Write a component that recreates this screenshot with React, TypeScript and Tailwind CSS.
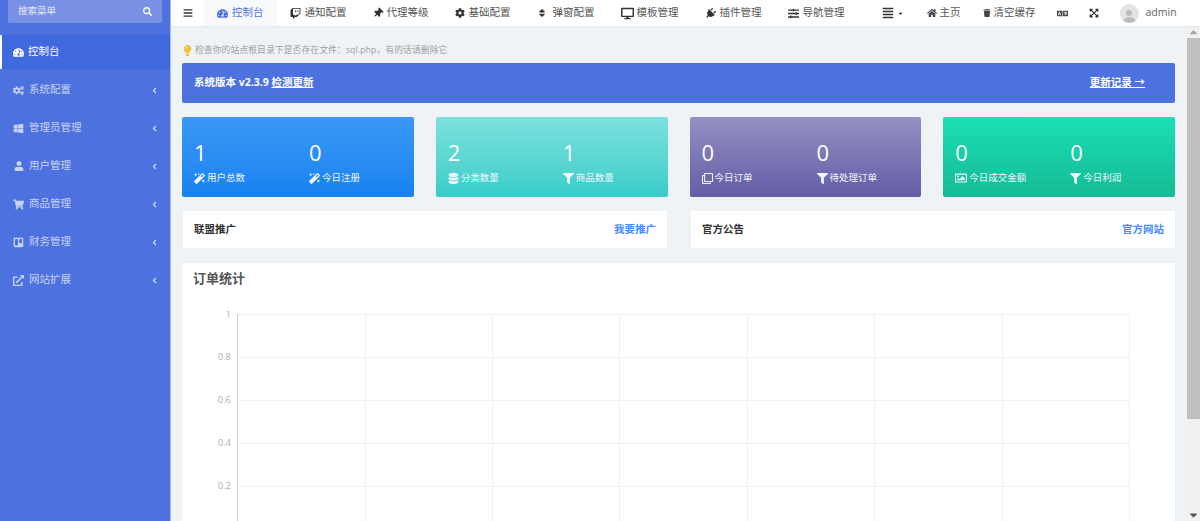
import type { ReactNode } from "react";
import {
  FaAngleLeft, FaBars, FaCaretDown, FaCogs, FaDatabase, FaDesktop, FaExpand, FaFilter,
  FaHome, FaLanguage, FaLightbulb, FaMagic, FaPlug, FaRegClone, FaRegImage, FaSearch, FaShoppingCart,
  FaSlidersH, FaSort, FaTachometerAlt, FaThumbtack, FaTrash, FaTrello, FaTwitch, FaUser, FaWindows,
  FaCog, FaExternalLinkAlt, FaAlignJustify, FaCaretUp, FaExpandArrowsAlt,
} from "react-icons/fa";

const font = "font-['Open_Sans','Noto_Sans_CJK_SC',sans-serif]";

const menu = [
  { icon: <FaCogs />, label: "系统配置" },
  { icon: <FaWindows />, label: "管理员管理" },
  { icon: <FaUser className="text-[10px] ml-[1px]" />, label: "用户管理" },
  { icon: <FaShoppingCart />, label: "商品管理" },
  { icon: <FaTrello />, label: "财务管理" },
  { icon: <FaExternalLinkAlt />, label: "网站扩展" },
];

const tabs = [
  { icon: <FaTwitch className="text-[11px]" />, label: "通知配置", gap: "gap-[4px]" },
  { icon: <FaThumbtack className="rotate-45" />, label: "代理等级", gap: "gap-[4px]" },
  { icon: <FaCog />, label: "基础配置", gap: "gap-[4px]" },
  { icon: <FaSort />, label: "弹窗配置", gap: "gap-[6px]" },
  { icon: <FaDesktop className="text-[13px]" />, label: "模板管理", gap: "gap-[3px]" },
  { icon: <FaPlug className="rotate-45 text-[11px]" />, label: "插件管理", gap: "gap-[4px]" },
  { icon: <FaSlidersH className="text-[11px]" />, label: "导航管理", gap: "gap-[4px]" },
];

type Stat = { value: string; icon: ReactNode; label: string };

const cards: { bg: string; stats: Stat[] }[] = [
  {
    bg: "bg-gradient-to-b from-[#3b98f5] to-[#1682f0]",
    stats: [
      { value: "1", icon: <FaMagic />, label: "用户总数" },
      { value: "0", icon: <FaMagic />, label: "今日注册" },
    ],
  },
  {
    bg: "bg-gradient-to-b from-[#7be0dd] to-[#36cdc9]",
    stats: [
      { value: "2", icon: <FaDatabase />, label: "分类数量" },
      { value: "1", icon: <FaFilter />, label: "商品数量" },
    ],
  },
  {
    bg: "bg-gradient-to-b from-[#9690c4] to-[#635da5]",
    stats: [
      { value: "0", icon: <FaRegClone />, label: "今日订单" },
      { value: "0", icon: <FaFilter />, label: "待处理订单" },
    ],
  },
  {
    bg: "bg-gradient-to-b from-[#1bdfb6] to-[#14bb96]",
    stats: [
      { value: "0", icon: <FaRegImage className="text-[12px]" />, label: "今日成交金额" },
      { value: "0", icon: <FaFilter />, label: "今日利润" },
    ],
  },
];

function Sidebar() {
  return (
    <aside className="w-[171px] shrink-0 bg-[#4d71df] border-r border-[#a9bcf2] flex flex-col">
      <div className="mx-[8px] h-[23px] rounded-b-[2px] bg-[#7891e5] flex items-center justify-between pl-[10px] pr-[10px] text-white">
        <span className="text-[9.5px] text-[#e6ebfa]">搜索菜单</span>
        <FaSearch className="text-[9px]" />
      </div>
      <div className="mt-[12px] h-[34px] bg-[#4169de] border-l-2 border-white flex items-center pl-[11px] gap-[4px] text-white">
        <FaTachometerAlt className="text-[11px]" />
        <span className="text-[10.5px]">控制台</span>
      </div>
      <ul className="mt-[2px]">
        {menu.map((m) => (
          <li key={m.label} className="h-[38px] flex items-center pl-[13px] pr-[11px] text-[#c8d3f5]">
            <span className="w-[16px] text-[11px]">{m.icon}</span>
            <span className="text-[10.5px] flex-1">{m.label}</span>
            <FaAngleLeft className="text-[9px]" />
          </li>
        ))}
      </ul>
    </aside>
  );
}

function Header() {
  return (
    <header className="h-[26px] bg-white flex items-center whitespace-nowrap text-[10.5px] text-[#555] shadow-[0_1px_1px_rgba(0,0,0,0.04)] relative">
      <FaBars className="ml-[12px] text-[10px] text-[#333] shrink-0" />
      <div className="ml-[11px] h-full px-[13px] bg-[#f8f9fb] flex shrink-0 items-center gap-[4px] text-[#4d71df]">
        <FaTachometerAlt className="text-[11px]" />
        <span>控制台</span>
      </div>
      {tabs.map((t) => (
        <div key={t.label} className={`h-full px-[13px] flex shrink-0 items-center ${t.gap}`}>
          <span className="text-[10px] text-[#333]">{t.icon}</span>
          <span>{t.label}</span>
        </div>
      ))}
      <div className="ml-[24px] flex shrink-0 items-center gap-[3px] text-[#333]">
        <FaAlignJustify className="text-[12px]" />
        <FaCaretDown className="text-[7px]" />
      </div>
      <div className="ml-[23px] flex shrink-0 items-center gap-[3px]">
        <FaHome className="text-[10px] text-[#444]" />
        <span>主页</span>
      </div>
      <div className="ml-[22px] flex shrink-0 items-center gap-[3px]">
        <FaTrash className="text-[8px] text-[#444]" />
        <span>清空缓存</span>
      </div>
      <FaLanguage className="ml-[21px] shrink-0 text-[11px] text-[#444]" />
      <FaExpandArrowsAlt className="ml-[21px] shrink-0 text-[10px] text-[#333]" />
      <div className="ml-[21px] w-[19px] h-[19px] shrink-0 rounded-full bg-[#e4e4e4] flex flex-col items-center justify-end overflow-hidden">
        <div className="w-[6px] h-[6px] rounded-full bg-[#bcbcbc] mb-[1px]" />
        <div className="w-[13px] h-[6px] rounded-t-full bg-[#bcbcbc]" />
      </div>
      <span className="ml-[7px] text-[#666]">admin</span>
      <FaCogs className="ml-[23px] shrink-0 text-[11px] text-[#333]" />
    </header>
  );
}

function StatCard({ bg, stats }: { bg: string; stats: Stat[] }) {
  return (
    <div className={`${bg} h-[80px] rounded-[2px] pl-[12px] pt-[22px] grid grid-cols-[115px_1fr] text-white`}>
      {stats.map((s) => (
        <div key={s.label}>
          <div className="text-[22px] leading-[26px]">{s.value}</div>
          <div className="mt-[6px] flex items-center gap-[2px] text-[9.5px] leading-[14px] text-[#f0f6fd]">
            <span className="text-[11px]">{s.icon}</span>
            <span>{s.label}</span>
          </div>
        </div>
      ))}
    </div>
  );
}

function Panel({ title, link }: { title: string; link: string }) {
  return (
    <div className="h-[37px] bg-white flex items-center justify-between px-[11px] text-[10.5px] font-bold">
      <span className="text-[#333]">{title}</span>
      <span className="text-[#4a8cf7]">{link}</span>
    </div>
  );
}

function Chart() {
  const ys = [0, 43, 86, 129, 172];
  const xs = [0, 128, 255, 382, 510, 637, 765, 892];
  return (
    <svg width="960" height="210" className="mt-[24px] block text-[#aaa]">
      {ys.map((y) => (
        <line key={y} x1="44" x2="937" y1={y + 3.5} y2={y + 3.5} stroke="#f1f1f1" />
      ))}
      {xs.map((x) => (
        <line key={x} x1={x + 44.5} x2={x + 44.5} y1="3" y2="210" stroke={x === 0 ? "#d0d0d0" : "#f1f1f1"} />
      ))}
      {["1", "0.8", "0.6", "0.4", "0.2"].map((t, i) => (
        <text key={t} x="38" y={ys[i] + 6} textAnchor="end" fontSize="9.5" fill="#b0b0b0" fontFamily="Open Sans, sans-serif">
          {t}
        </text>
      ))}
    </svg>
  );
}

function Scrollbar() {
  return (
    <div className="w-[13px] shrink-0 bg-[#f1f1f1] flex flex-col items-center">
      <FaCaretUp className="h-[12px] text-[9px] text-[#a3a3a3]" />
      <div className="w-full h-[381px] bg-[#bfbfbf]" />
      <div className="flex-1" />
      <FaCaretDown className="h-[12px] text-[9px] text-[#505050]" />
    </div>
  );
}

export default function App() {
  return (
    <div className={`${font} h-[521px] w-[1200px] overflow-hidden flex bg-[#eff3f6]`}>
      <Sidebar />
      <div className="flex-1 min-w-0 flex flex-col">
        <Header />
        <div className="flex-1 min-h-0 flex">
          <main className="flex-1 min-w-0 overflow-hidden pl-[11px] pr-[12px]">
            <div className="h-[37px] pt-[11px] flex items-center gap-[2px] text-[8.9px] text-[#a0a0a0]">
              <FaLightbulb className="text-[11px] text-[#f0c040]" />
              <span>检查你的站点根目录下是否存在文件：sql.php，有的话请删除它</span>
            </div>
            <div className="h-[40px] rounded-[2px] bg-[#4d71df] flex items-center justify-between pl-[12px] pr-[30px] text-[10.5px] font-bold text-white">
              <span>
                系统版本 v2.3.9 <span className="underline">检测更新</span>
              </span>
              <span className="underline">更新记录 →</span>
            </div>
            <div className="mt-[14px] grid grid-cols-4 gap-[22px]">
              {cards.map((c) => (
                <StatCard key={c.stats[0].label} bg={c.bg} stats={c.stats} />
              ))}
            </div>
            <div className="mt-[14px] ml-[1px] grid grid-cols-2 gap-[24px]">
              <Panel title="联盟推广" link="我要推广" />
              <Panel title="官方公告" link="官方网站" />
            </div>
            <section className="mt-[15px] bg-white pl-[11px] pt-[7px] h-[300px]">
              <h3 className="text-[13px] leading-[17px] font-bold text-[#555]">订单统计</h3>
              <Chart />
            </section>
          </main>
          <Scrollbar />
        </div>
      </div>
    </div>
  );
}
